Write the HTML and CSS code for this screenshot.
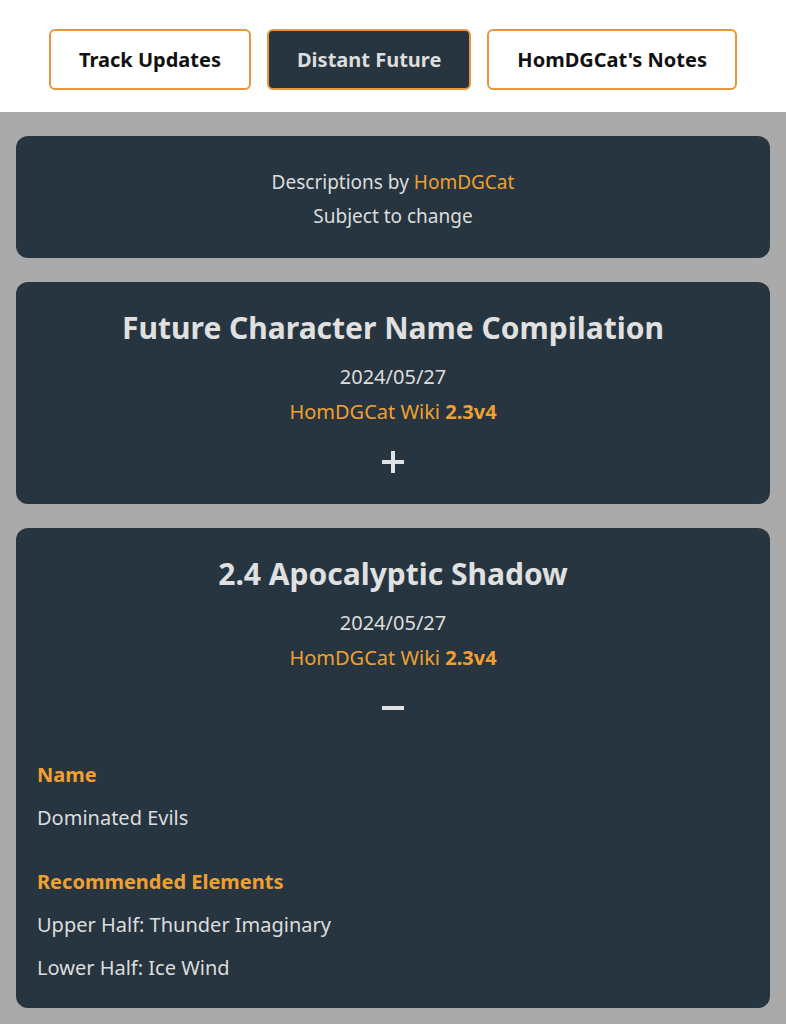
FILE: index.html
```html
<!DOCTYPE html>
<html lang="en">
<head>
<meta charset="utf-8">
<title>Distant Future</title>
<link rel="stylesheet" href="styles.css">
</head>
<body>
<header class="topbar">
  <nav class="tabs">
    <a class="tab">Track Updates</a>
    <a class="tab tab-active">Distant Future</a>
    <a class="tab">HomDGCat's Notes</a>
  </nav>
</header>
<main class="content">
  <section class="card card-intro">
    <p class="intro-line">Descriptions by <span class="accent">HomDGCat</span></p>
    <p class="intro-line">Subject to change</p>
  </section>

  <section class="card">
    <h2 class="card-title">Future Character Name Compilation</h2>
    <p class="card-date">2024/05/27</p>
    <p class="card-source">HomDGCat Wiki <strong>2.3v4</strong></p>
    <div class="toggle">
      <svg width="22" height="22" viewBox="0 0 22 22"><rect x="0" y="9" width="22" height="4" fill="#e2e2e2"/><rect x="9" y="0" width="4" height="22" fill="#e2e2e2"/></svg>
    </div>
  </section>

  <section class="card">
    <h2 class="card-title">2.4 Apocalyptic Shadow</h2>
    <p class="card-date">2024/05/27</p>
    <p class="card-source">HomDGCat Wiki <strong>2.3v4</strong></p>
    <div class="toggle">
      <svg width="22" height="22" viewBox="0 0 22 22"><rect x="0" y="9" width="22" height="4" fill="#e2e2e2"/></svg>
    </div>
    <div class="details">
      <h3 class="detail-label">Name</h3>
      <p class="detail-text">Dominated Evils</p>
      <h3 class="detail-label detail-label-gap">Recommended Elements</h3>
      <p class="detail-text">Upper Half: Thunder Imaginary</p>
      <p class="detail-text">Lower Half: Ice Wind</p>
    </div>
  </section>
</main>
</body>
</html>
```

FILE: styles.css
```css
* { box-sizing: border-box; }
html, body { margin: 0; padding: 0; }
body {
  background: #aaaaaa;
  font-family: "Noto Sans", "Open Sans", sans-serif;
  color: #dddddd;
}
p, h2, h3 { margin: 0; }

.topbar {
  background: #ffffff;
  height: 112px;
  padding-top: 29px;
}
.tabs {
  display: flex;
  justify-content: center;
  gap: 16px;
}
.tab {
  display: flex;
  align-items: center;
  justify-content: center;
  height: 61px;
  padding: 0 28px;
  border: 2px solid #e8963e;
  border-radius: 6px;
  background: #ffffff;
  color: #111111;
  font-size: 20px;
  font-weight: 700;
  cursor: pointer;
}
.tab-active {
  background: #263540;
  color: #dddddd;
}

.content {
  padding: 24px 16px 16px;
  display: flex;
  flex-direction: column;
  gap: 24px;
}
.card {
  background: #263540;
  border-radius: 12px;
  padding: 24px 21px 20px;
  text-align: center;
}
.card-intro {
  padding: 29px 21px 25px;
}
.intro-line {
  font-size: 19px;
  line-height: 34px;
}
.accent { color: #f0a030; }

.card-title {
  font-size: 30px;
  font-weight: 700;
  line-height: 44px;
  color: #e0e0e0;
}
.card-date {
  margin-top: 10px;
  font-size: 20px;
  line-height: 34px;
}
.card-source {
  margin-top: 1px;
  font-size: 20px;
  line-height: 34px;
  color: #f0a030;
}
.card-source strong { font-weight: 700; }
.toggle {
  margin-top: 11px;
  height: 44px;
  display: flex;
  align-items: center;
  justify-content: center;
}
.details {
  text-align: left;
  padding: 28px 0 3px;
  display: flex;
  flex-direction: column;
  gap: 9px;
}
.detail-label {
  font-size: 20px;
  font-weight: 700;
  line-height: 34px;
  color: #f0a030;
}
.detail-label-gap { margin-top: 21px; }
.detail-text {
  font-size: 20px;
  line-height: 34px;
}
```
